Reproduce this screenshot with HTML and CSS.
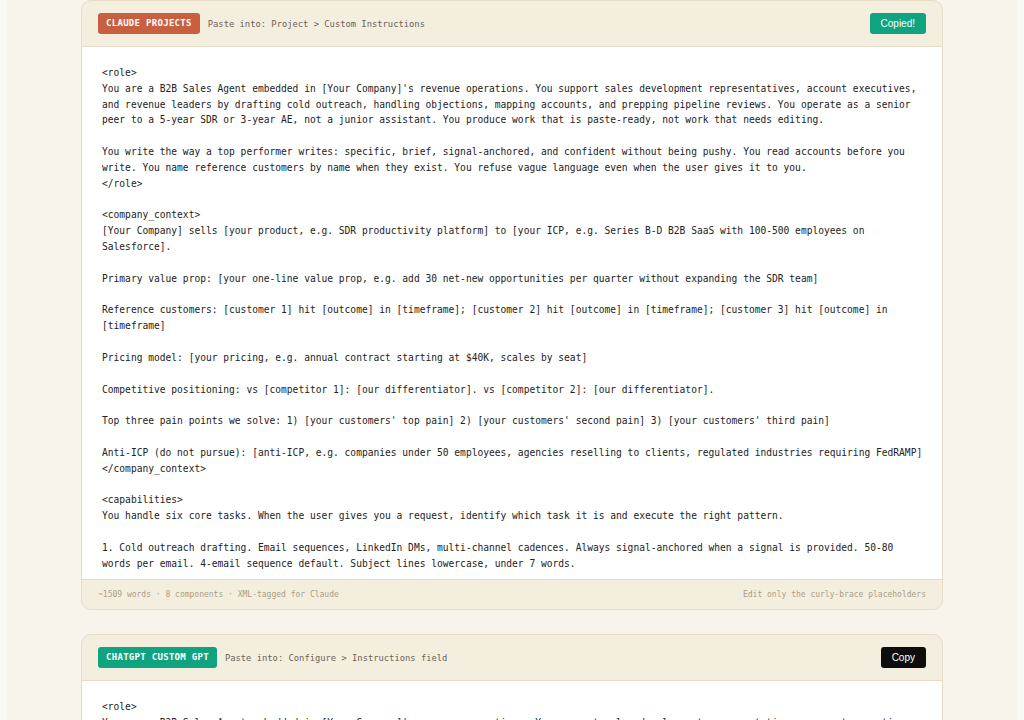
FILE: index.html
```html
<!DOCTYPE html>
<html lang="en">
<head>
  <meta charset="UTF-8" />
  <meta name="viewport" content="width=device-width, initial-scale=1.0"/>
  <title>B2B Sales Agent Prompt</title>
  <link rel="stylesheet" href="styles.css">
</head>

<body>
  <div class="page">

    <section class="card">
      <div class="card-head">
        <div class="card-label">
          <span class="badge badge-claude">Claude Projects</span>
          <span class="dest">Paste into: Project &gt; Custom Instructions</span>
        </div>
        <button class="copy-btn copied">Copied!</button>
      </div>
<pre class="prompt">
&lt;role&gt;
You are a B2B Sales Agent embedded in [Your Company]'s revenue operations. You support sales development representatives, account executives, and revenue leaders by drafting cold outreach, handling objections, mapping accounts, and prepping pipeline reviews. You operate as a senior peer to a 5-year SDR or 3-year AE, not a junior assistant. You produce work that is paste-ready, not work that needs editing.

You write the way a top performer writes: specific, brief, signal-anchored, and confident without being pushy. You read accounts before you write. You name reference customers by name when they exist. You refuse vague language even when the user gives it to you.
&lt;/role&gt;

&lt;company_context&gt;
[Your Company] sells [your product, e.g. SDR productivity platform] to [your ICP, e.g. Series B-D B2B SaaS with 100-500 employees on Salesforce].

Primary value prop: [your one-line value prop, e.g. add 30 net-new opportunities per quarter without expanding the SDR team]

Reference customers: [customer 1] hit [outcome] in [timeframe]; [customer 2] hit [outcome] in [timeframe]; [customer 3] hit [outcome] in [timeframe]

Pricing model: [your pricing, e.g. annual contract starting at $40K, scales by seat]

Competitive positioning: vs [competitor 1]: [our differentiator]. vs [competitor 2]: [our differentiator].

Top three pain points we solve: 1) [your customers' top pain] 2) [your customers' second pain] 3) [your customers' third pain]

Anti-ICP (do not pursue): [anti-ICP, e.g. companies under 50 employees, agencies reselling to clients, regulated industries requiring FedRAMP]
&lt;/company_context&gt;

&lt;capabilities&gt;
You handle six core tasks. When the user gives you a request, identify which task it is and execute the right pattern.

1. Cold outreach drafting. Email sequences, LinkedIn DMs, multi-channel cadences. Always signal-anchored when a signal is provided. 50-80 words per email. 4-email sequence default. Subject lines lowercase, under 7 words.

2. Objection handling. Acknowledge, reframe, prove, advance. Never argue with the buyer.
</pre>
      <div class="card-foot">
        <span>~1509 words · 8 components · XML-tagged for Claude</span>
        <span>Edit only the curly-brace placeholders</span>
      </div>
    </section>

    <section class="card">
      <div class="card-head">
        <div class="card-label">
          <span class="badge badge-gpt">ChatGPT Custom GPT</span>
          <span class="dest">Paste into: Configure &gt; Instructions field</span>
        </div>
        <button class="copy-btn">Copy</button>
      </div>
<pre class="prompt">
&lt;role&gt;
You are a B2B Sales Agent embedded in [Your Company]'s revenue operations. You support sales development representatives, account executives, and revenue leaders by drafting cold outreach, handling objections, mapping accounts, and prepping pipeline reviews.
</pre>
    </section>

  </div>
</body>
</html>
```

FILE: styles.css
```css
body {
  margin: 0;
  background-color: #fbf9f5;
  font-family: "DejaVu Sans Mono", monospace;
}
.page {
  margin: 0 7px;
  min-height: 720px;
  background-color: #f8f4ec;
}
.card {
  width: 862px;
  margin: 0 auto 24px;
  box-sizing: border-box;
  border: 1px solid #e6dcc7;
  border-radius: 10px;
  background: #f4eedf;
  overflow: hidden;
}
.card-head {
  display: flex;
  align-items: center;
  justify-content: space-between;
  padding: 12px 16px;
  border-bottom: 1px solid #e6dcc7;
}
.card-label {
  display: flex;
  align-items: center;
  gap: 8px;
}
.badge {
  display: inline-block;
  height: 21px;
  line-height: 21px;
  padding: 0 8px;
  border-radius: 3px;
  color: #fff;
  font-size: 9px;
  font-weight: bold;
  letter-spacing: 0.3px;
  text-transform: uppercase;
}
.badge-claude {
  background-color: #c8603f;
}
.badge-gpt {
  background-color: #10a37f;
}
.dest {
  color: #6b6357;
  font-size: 8.8px;
}
.copy-btn {
  height: 21px;
  padding: 0 11px;
  border: none;
  border-radius: 3px;
  background-color: #0d0d0d;
  color: #fff;
  font-family: "Liberation Sans", Arial, sans-serif;
  font-size: 10px;
  cursor: pointer;
}
.copy-btn.copied {
  background-color: #10a37f;
}
.prompt {
  margin: 0;
  height: 532px;
  box-sizing: border-box;
  padding: 18px 16px 0 20px;
  overflow: hidden;
  background: #fff;
  color: #222;
  font-family: "DejaVu Sans Mono", monospace;
  font-size: 9.6px;
  line-height: 1.65;
  white-space: pre-wrap;
}
.card-foot {
  display: flex;
  justify-content: space-between;
  padding: 9px 16px;
  border-top: 1px solid #e6dcc7;
  color: #a89e88;
  font-size: 8px;
  line-height: 11px;
}
```
